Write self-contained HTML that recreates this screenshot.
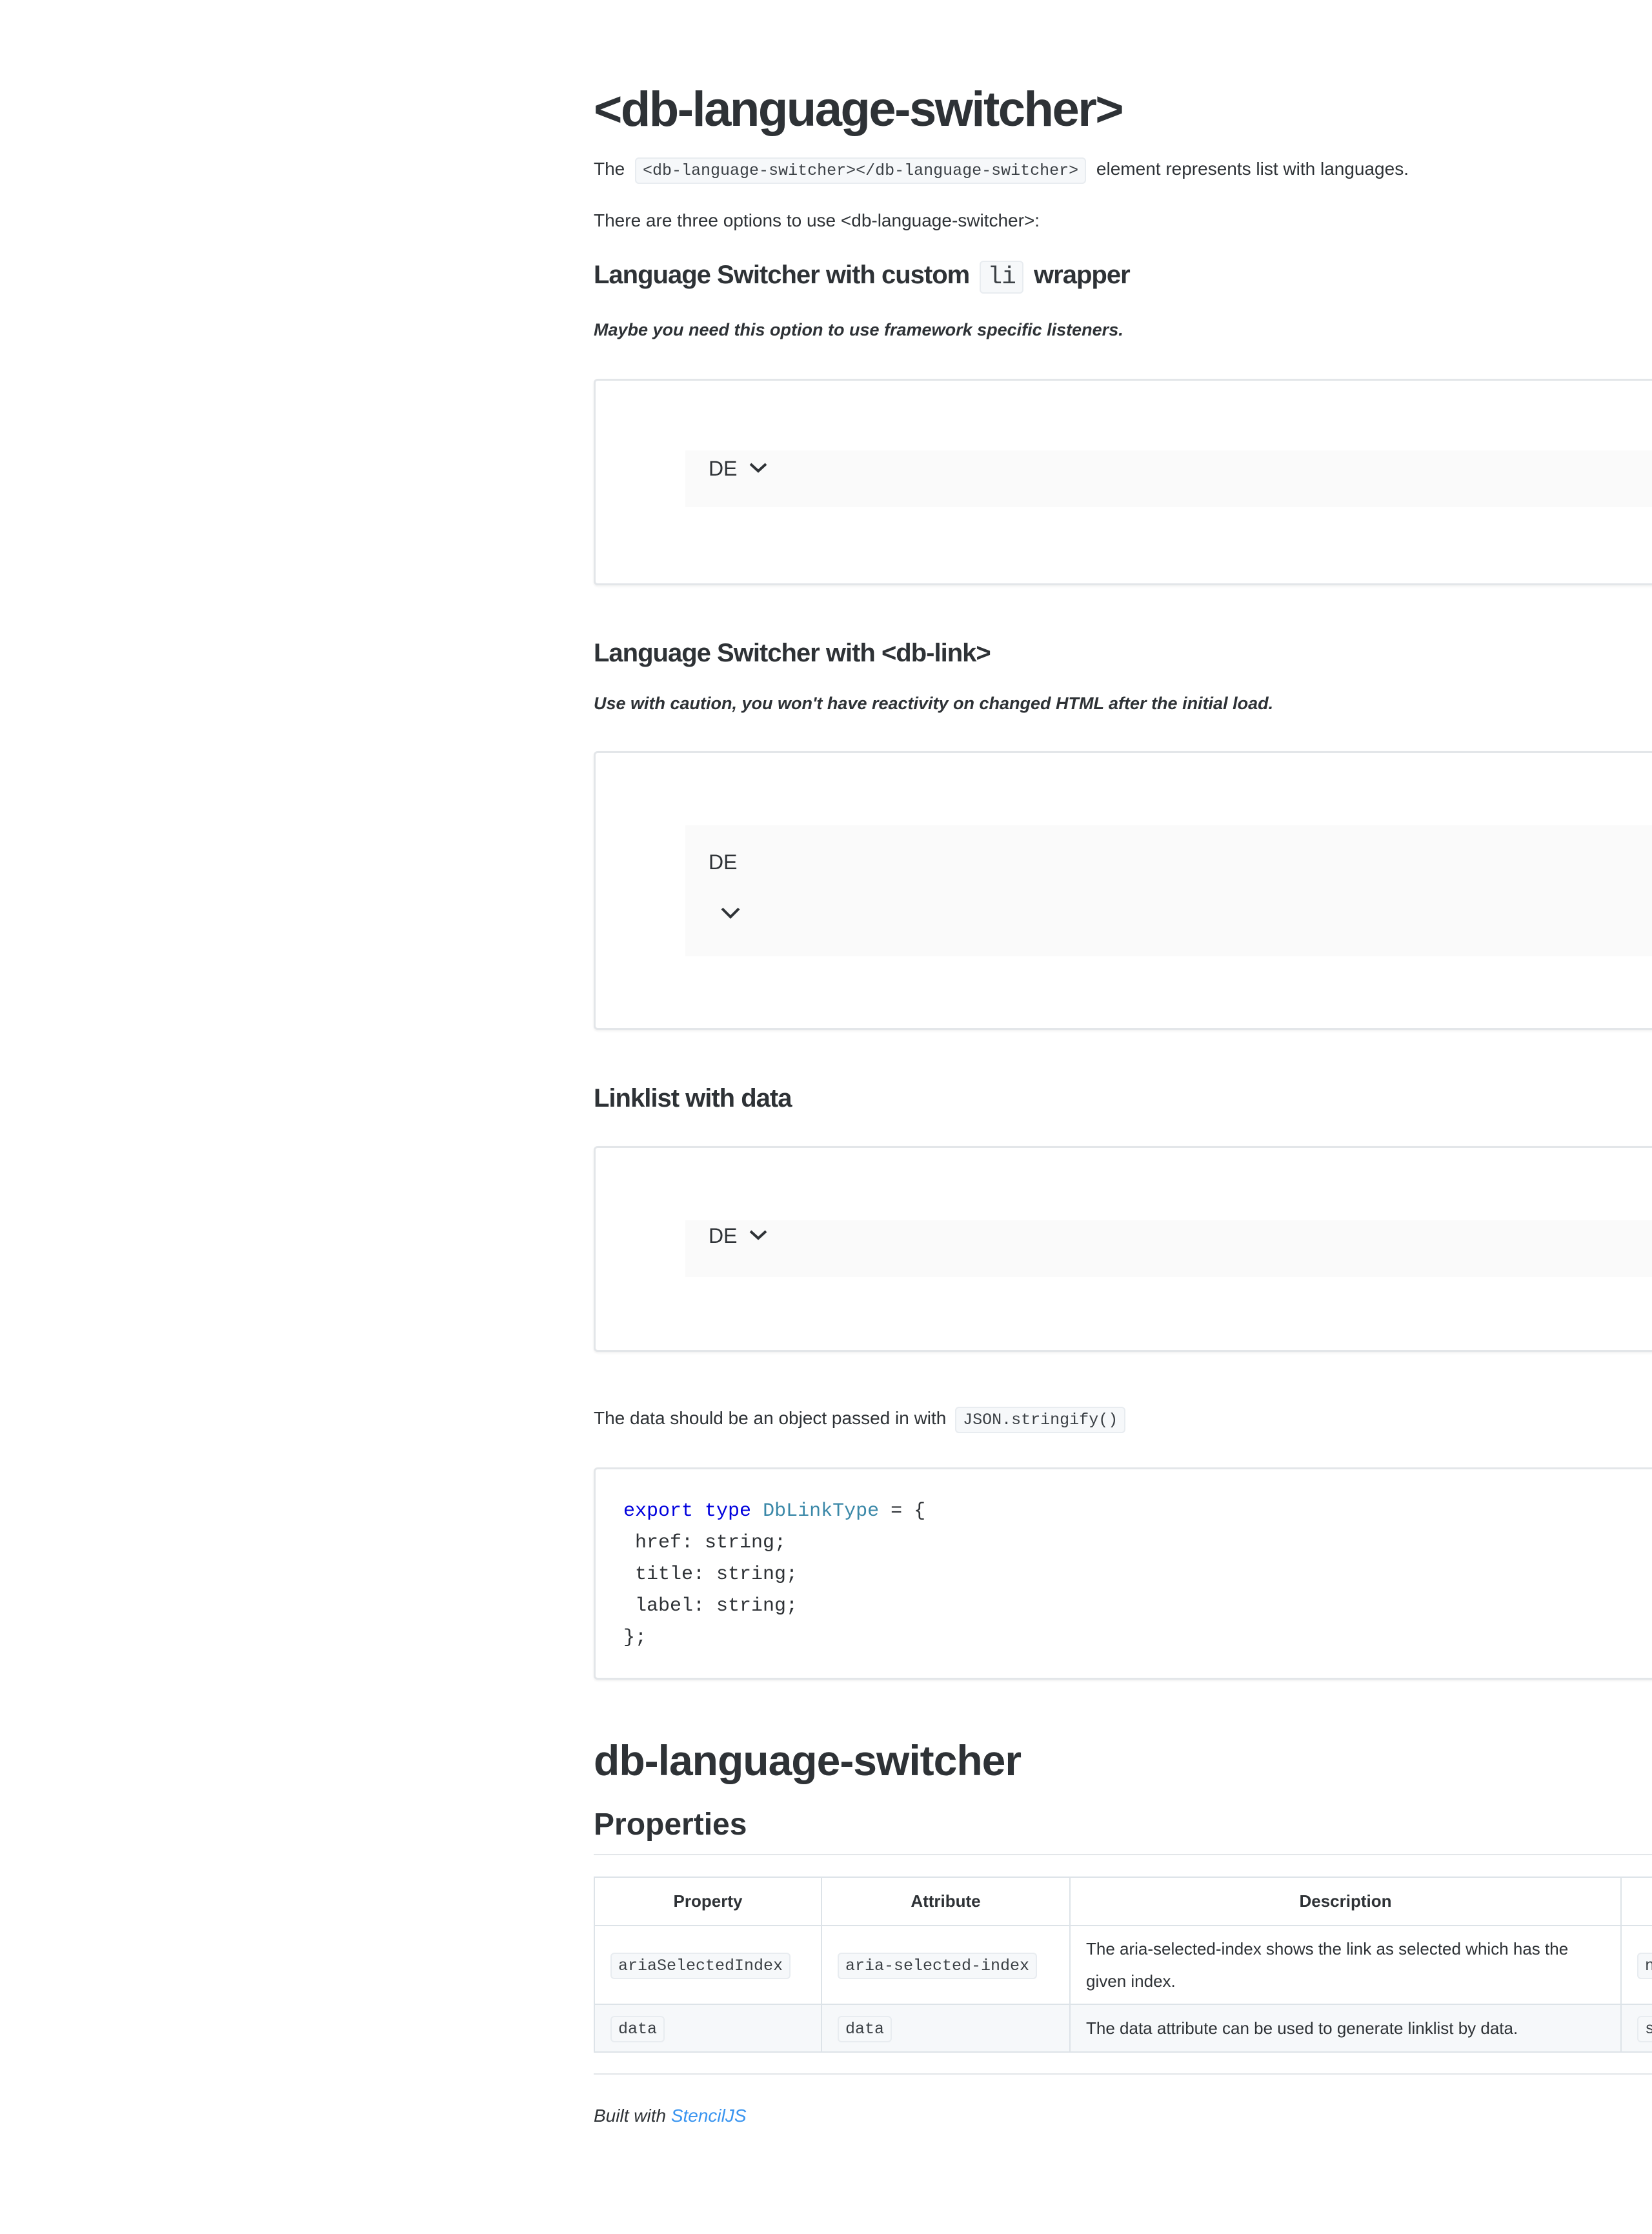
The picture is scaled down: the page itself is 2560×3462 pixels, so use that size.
<!DOCTYPE html>
<html><head><meta charset="utf-8"><style>
*{margin:0;padding:0;box-sizing:border-box}
html,body{width:2560px;height:3462px;overflow:hidden;background:#fff}
body{font-family:"Liberation Sans",sans-serif;color:#2e3236;position:relative}
.a{position:absolute;white-space:nowrap}
.p{font-size:28px;line-height:1}
code,.m{font-family:"Liberation Mono","DejaVu Sans Mono",monospace}
.c{background:#f6f8fa;border:2px solid #e8ecf0;border-radius:6px;padding:4px 10px;font-size:25px;color:#3b4045;white-space:nowrap}
.box{position:absolute;left:920px;width:1700px;border:3px solid #e3e6e9;border-radius:6px;background:#fff;box-shadow:0 2px 3px rgba(0,0,0,.06)}
.strip{position:absolute;left:1062px;width:1500px;background:#fafafa}
.de{font-size:32px;color:#2e3236}
.h3{font-size:40px;font-weight:bold;letter-spacing:-1px}
.it{font-size:27px;font-style:italic;font-weight:bold;color:#2e3236}
table{position:absolute;left:920px;top:2908px;border-collapse:collapse;font-size:26px;table-layout:fixed;width:2000px}
td,th{border:2px solid #dde3e8;padding:0 24px;white-space:nowrap;overflow:hidden}
th{height:75px;font-weight:bold;text-align:center}
</style></head><body>
<div class="a" style="left:920px;top:126px;font-size:76px;font-weight:bold;letter-spacing:-2.5px">&lt;db-language-switcher&gt;</div>
<div class="a p" style="left:920px;top:248px">The <span class="c m" style="margin:0 8px">&lt;db-language-switcher&gt;&lt;/db-language-switcher&gt;</span> element represents list with languages.</div>
<div class="a p" style="left:920px;top:328px">There are three options to use &lt;db-language-switcher&gt;:</div>
<div class="a h3" style="left:920px;top:404px">Language Switcher with custom <span class="c m" style="font-size:38px;font-weight:normal;padding:2px 10px;margin:0 6px">li</span> wrapper</div>
<div class="a it" style="left:920px;top:496px">Maybe you need this option to use framework specific listeners.</div>

<div class="box" style="top:587px;height:320px"></div>
<div class="strip" style="top:698px;height:88px"></div>
<div class="a de" style="left:1098px;top:708px">DE</div>
<svg class="a" style="left:1160px;top:715px" width="30" height="20" viewBox="0 0 30 20"><path d="M3 4 L15 15 L27 4" fill="none" stroke="#2e3236" stroke-width="4"/></svg>

<div class="a h3" style="left:920px;top:990px">Language Switcher with &lt;db-link&gt;</div>
<div class="a it" style="left:920px;top:1075px">Use with caution, you won't have reactivity on changed HTML after the initial load.</div>
<div class="box" style="top:1164px;height:432px"></div>
<div class="strip" style="top:1279px;height:203px"></div>
<div class="a de" style="left:1098px;top:1318px">DE</div>
<svg class="a" style="left:1116px;top:1404px" width="32" height="22" viewBox="0 0 32 22"><path d="M3 4 L16 17 L29 4" fill="none" stroke="#2e3236" stroke-width="4"/></svg>

<div class="a h3" style="left:920px;top:1680px">Linklist with data</div>
<div class="box" style="top:1776px;height:319px"></div>
<div class="strip" style="top:1891px;height:88px"></div>
<div class="a de" style="left:1098px;top:1897px">DE</div>
<svg class="a" style="left:1160px;top:1904px" width="30" height="20" viewBox="0 0 30 20"><path d="M3 4 L15 15 L27 4" fill="none" stroke="#2e3236" stroke-width="4"/></svg>

<div class="a p" style="left:920px;top:2184px">The data should be an object passed in with <span class="c m" style="margin-left:6px">JSON.stringify()</span></div>
<div class="box" style="top:2274px;height:329px"></div>
<div class="a m" style="left:966px;top:2318px;font-size:30px;line-height:49px;white-space:pre;color:#2e3236"><span style="color:#0000dd">export</span> <span style="color:#0000dd">type</span> <span style="color:#3a88a8">DbLinkType</span> = {
 href: string;
 title: string;
 label: string;
};</div>

<div class="a" style="left:920px;top:2690px;font-size:66px;font-weight:bold;letter-spacing:-1px">db-language-switcher</div>
<div class="a" style="left:920px;top:2800px;font-size:48px;font-weight:bold">Properties</div>
<div class="a" style="left:920px;top:2873px;width:1640px;height:2px;background:#e3e6e9"></div>
<table>
<colgroup><col style="width:352px"><col style="width:385px"><col style="width:854px"><col style="width:409px"></colgroup>
<tr><th>Property</th><th>Attribute</th><th>Description</th><th></th></tr>
<tr style="height:122px"><td><span class="c m">ariaSelectedIndex</span></td><td><span class="c m">aria-selected-index</span></td><td style="line-height:50px;white-space:normal;padding-right:60px">The aria-selected-index shows the link as selected which has the given index.</td><td><span class="c m">number</span></td></tr>
<tr style="height:74px;background:#f6f8fa"><td><span class="c m">data</span></td><td><span class="c m">data</span></td><td>The data attribute can be used to generate linklist by data.</td><td><span class="c m">string</span></td></tr>
</table>
<div class="a" style="left:920px;top:3213px;width:1640px;height:2px;background:#e3e6e9"></div>
<div class="a" style="left:920px;top:3263px;font-size:28px;font-style:italic">Built with <span style="color:#3894f0">StencilJS</span></div>
</body></html>
